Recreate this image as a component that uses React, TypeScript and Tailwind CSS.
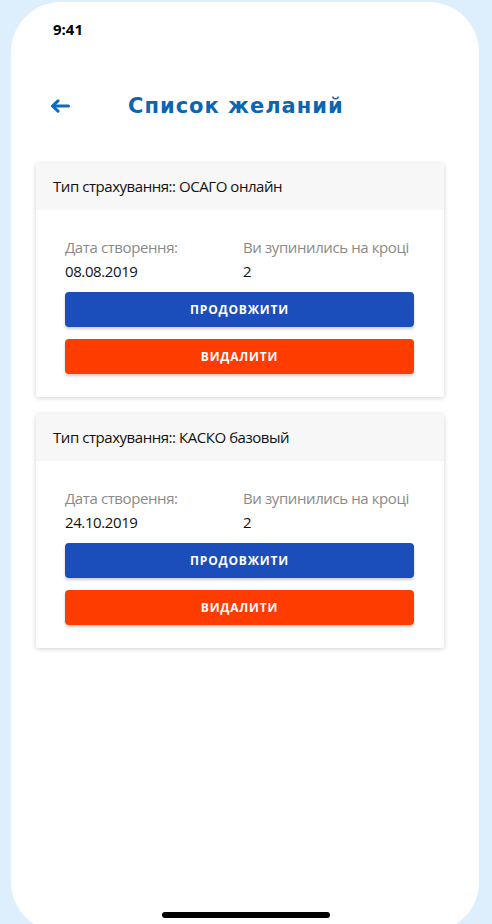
import React from "react";

const items = [
  { type: "ОСАГО онлайн", date: "08.08.2019", step: "2" },
  { type: "КАСКО базовый", date: "24.10.2019", step: "2" },
];

function Card({ type, date, step }: { type: string; date: string; step: string }) {
  return (
    <div className="w-[408px] bg-white rounded-[2px] shadow-[0_1px_5px_rgba(0,0,0,0.18)] overflow-hidden">
      <div className="h-[47px] bg-[#f7f7f7] flex items-center pl-[17px] text-[15px] text-[#111] tracking-[-0.45px]">
        Тип страхування:: {type}
      </div>
      <div className="pt-[25px] pb-[23px] pl-[29px] pr-[30px]">
        <div className="flex">
          <div className="w-[178px]">
            <div className="h-[24px] leading-[24px] text-[15px] text-[#8a8a8a] tracking-[-0.4px]">Дата створення:</div>
            <div className="h-[24px] leading-[24px] text-[15px] text-[#111] tracking-[-0.4px]">{date}</div>
          </div>
          <div>
            <div className="h-[24px] leading-[24px] text-[15px] text-[#8a8a8a] tracking-[-0.4px]">Ви зупинились на кроці</div>
            <div className="h-[24px] leading-[24px] text-[15px] text-[#111]">{step}</div>
          </div>
        </div>
        <button className="mt-[9px] w-full h-[35px] rounded-[4px] bg-[#1b4dbb] text-white text-[12px] font-bold tracking-[0.8px] shadow-[0_2px_3px_rgba(0,0,0,0.2)] flex items-center justify-center">
          ПРОДОВЖИТИ
        </button>
        <button className="mt-[12px] w-full h-[35px] rounded-[4px] bg-[#ff3c00] text-white text-[12px] font-bold tracking-[0.8px] shadow-[0_2px_3px_rgba(0,0,0,0.2)] flex items-center justify-center">
          ВИДАЛИТИ
        </button>
      </div>
    </div>
  );
}

export default function App() {
  return (
    <div
      className="w-[492px] h-[924px] bg-[#ddeefd] overflow-hidden"
      style={{ fontFamily: '"Open Sans", "Noto Sans", sans-serif' }}
    >
      <div className="ml-[11px] mt-[2px] w-[468px] h-[930px] bg-white rounded-[50px] relative">
        <div className="pt-[16px] pl-[42px] h-[42px] text-[15px] font-bold text-black leading-[22px]">9:41</div>
        <div className="mt-[49px] flex items-center h-[26px]">
          <svg className="ml-[39px]" width="20" height="14" viewBox="0 0 20 14" fill="none">
            <path d="M18.5 7H3" stroke="#0a6cbd" strokeWidth="3" strokeLinecap="round" />
            <path d="M8 1.8L2.5 7L8 12.2" stroke="#0a6cbd" strokeWidth="3" strokeLinecap="round" strokeLinejoin="round" />
          </svg>
          <div
            className="ml-[58px] text-[21px] font-bold text-[#0a65b3] tracking-[1px] leading-[26px]"
            style={{ fontFamily: '"DejaVu Sans", "Liberation Sans", sans-serif' }}
          >
            Список желаний
          </div>
        </div>
        <div className="mt-[44px] ml-[25px] flex flex-col gap-[17px]">
          {items.map((it) => (
            <Card key={it.type} {...it} />
          ))}
        </div>
        <div className="absolute left-[151px] top-[910px] w-[168px] h-[6px] rounded-full bg-black" />
      </div>
    </div>
  );
}
